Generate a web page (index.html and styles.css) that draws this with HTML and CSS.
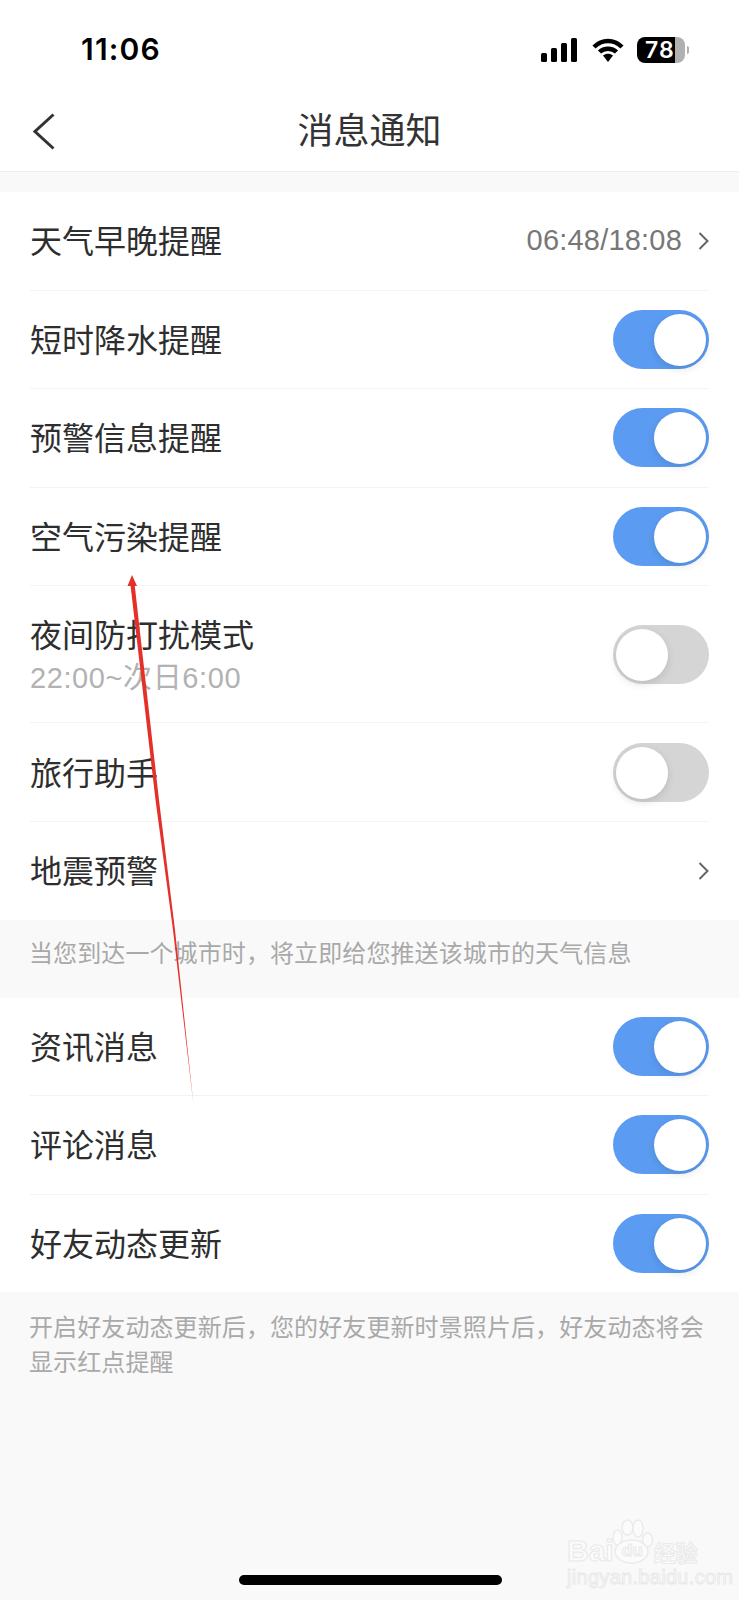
FILE: index.html
```html
<!DOCTYPE html>
<html lang="zh">
  <head>
    <meta charset="utf-8">
    <title>消息通知</title>
    <link rel="stylesheet" href="styles.css">
  </head>
  <body>
    <div class="page">
      <div class="status-bar">
        <span class="clock">11:06</span>
        <div class="status-icons">
          <svg class="signal" width="36" height="24" viewBox="0 0 36 24">
            <rect x="0" y="15" width="6" height="9" rx="1.5" />
            <rect x="10" y="10" width="6" height="14" rx="1.5" />
            <rect x="20" y="5" width="6" height="19" rx="1.5" />
            <rect x="30" y="0" width="6" height="24" rx="1.5" />
          </svg>
          <svg class="wifi" width="32" height="24" viewBox="0 0 32 24">
            <path d="M2 9 C10 1 22 1 30 9" />
            <path d="M7.5 14 C12 9.5 20 9.5 24.5 14" />
            <path class="wifi-dot" d="M11 17.5 C14 15 18 15 21 17.5 L16 24 Z" />
          </svg>
          <div class="battery">
            <div class="battery-body"><span class="battery-num">78</span></div>
            <div class="battery-nub"></div>
          </div>
        </div>
      </div>

      <div class="nav-bar">
        <svg class="back-icon" width="22" height="37" viewBox="0 0 22 37">
          <path d="M20.5 1.5 L2 18.5 L20.5 35.5" />
        </svg>
        <span class="nav-title">消息通知</span>
      </div>

      <div class="section section-first">
        <div class="row">
          <span class="row-label">天气早晚提醒</span>
          <div class="row-right">
            <span class="row-value">06:48/18:08</span>
            <svg class="chevron" width="11" height="18" viewBox="0 0 11 18"><path d="M1.5 1 L9.5 9 L1.5 17" /></svg>
          </div>
        </div>
        <div class="row">
          <span class="row-label">短时降水提醒</span>
          <div class="toggle on"><div class="knob"></div></div>
        </div>
        <div class="row">
          <span class="row-label">预警信息提醒</span>
          <div class="toggle on"><div class="knob"></div></div>
        </div>
        <div class="row">
          <span class="row-label">空气污染提醒</span>
          <div class="toggle on"><div class="knob"></div></div>
        </div>
        <div class="row row-tall">
          <div class="row-text">
            <span class="row-title">夜间防打扰模式</span>
            <span class="row-sub">22:00~次日6:00</span>
          </div>
          <div class="toggle"><div class="knob"></div></div>
        </div>
        <div class="row">
          <span class="row-label">旅行助手</span>
          <div class="toggle"><div class="knob"></div></div>
        </div>
        <div class="row">
          <span class="row-label">地震预警</span>
          <svg class="chevron" width="11" height="18" viewBox="0 0 11 18"><path d="M1.5 1 L9.5 9 L1.5 17" /></svg>
        </div>
      </div>

      <p class="note note-single">当您到达一个城市时，将立即给您推送该城市的天气信息</p>

      <div class="section">
        <div class="row">
          <span class="row-label">资讯消息</span>
          <div class="toggle on"><div class="knob"></div></div>
        </div>
        <div class="row">
          <span class="row-label">评论消息</span>
          <div class="toggle on"><div class="knob"></div></div>
        </div>
        <div class="row">
          <span class="row-label">好友动态更新</span>
          <div class="toggle on"><div class="knob"></div></div>
        </div>
      </div>

      <p class="note">开启好友动态更新后，您的好友更新时景照片后，好友动态将会<br>显示红点提醒</p>

      <div class="home-bar"></div>

      <!-- annotation drawn over the screenshot -->
      <svg class="arrow" width="739" height="1600" viewBox="0 0 739 1600">
        <path d="M132 575 L137 586 L134.8 586 L159 800 L175 930 L193.5 1105 L173 930 L155.5 800 L130.6 586 L127.5 586 Z" />
      </svg>

      <div class="watermark">
        <svg class="paw" width="42" height="46" viewBox="0 0 42 46">
          <ellipse cx="5.5" cy="19.5" rx="4.5" ry="7.5" />
          <ellipse cx="15.5" cy="9.5" rx="5.5" ry="7.5" />
          <ellipse cx="26" cy="10.5" rx="5" ry="8.5" />
          <ellipse cx="35.5" cy="22" rx="5" ry="7" />
          <ellipse cx="19.5" cy="33.5" rx="16.5" ry="11.5" />
        </svg>
        <div class="wm-logo"><span>Bai</span><span class="wm-du">du</span><span class="wm-cn">经验</span></div>
        <div class="wm-url">jingyan.baidu.com</div>
      </div>
    </div>
  </body>
</html>
```

FILE: styles.css
```css
* {
  box-sizing: border-box;
}

html,
body {
  margin: 0;
  padding: 0;
}

body {
  font-family: "Noto Sans CJK SC", "Noto Sans", sans-serif;
  background: #f9f9f9;
}

.page {
  position: relative;
  width: 739px;
  height: 1600px;
  overflow: hidden;
  background: #f9f9f9;
}

/* status bar */
.status-bar {
  height: 86px;
  padding: 30px 50px 0 81px;
  display: flex;
  justify-content: space-between;
  align-items: flex-start;
  background: #fff;
}

.clock {
  font-family: Inter, sans-serif;
  font-size: 30px;
  line-height: 38px;
  font-weight: 600;
  letter-spacing: 1.2px;
  color: #000;
}

.status-icons {
  display: flex;
  align-items: center;
  gap: 15px;
  margin-top: 7px;
}

.signal {
  fill: #000;
}

.wifi {
  fill: none;
  stroke: #000;
  stroke-width: 4.5;
  margin-right: -2px;
}

.wifi-dot {
  fill: #000;
  stroke: none;
}

.battery {
  display: flex;
  align-items: center;
  gap: 2px;
}

.battery-body {
  width: 48px;
  height: 26px;
  border-radius: 8px;
  background: linear-gradient(to right, #000 38px, #b0b0b0 38px);
  padding-left: 8px;
}

.battery-num {
  display: block;
  font-family: Inter, sans-serif;
  font-size: 23px;
  line-height: 26px;
  font-weight: 600;
  letter-spacing: 1px;
  color: #fff;
}

.battery-nub {
  width: 2px;
  height: 8px;
  border-radius: 0 2px 2px 0;
  background: #b0b0b0;
}

/* nav bar */
.nav-bar {
  position: relative;
  height: 86px;
  display: flex;
  align-items: center;
  justify-content: center;
  background: #fff;
  border-bottom: 1px solid #eee;
}

.back-icon {
  position: absolute;
  left: 33px;
  top: 27px;
  fill: none;
  stroke: #333;
  stroke-width: 3;
}

.nav-title {
  font-size: 36px;
  color: #333;
  margin-top: -2px;
}

/* lists */
.section {
  background: #fff;
  padding: 0 30px;
}

.section-first {
  margin-top: 20px;
}

.row {
  height: 98.6px;
  display: flex;
  align-items: center;
  justify-content: space-between;
  border-bottom: 1px solid #f3f3f3;
}

.row:last-child {
  height: 97.6px;
  border-bottom: none;
}

.row-tall {
  height: 137px;
}

.row-text {
  display: flex;
  flex-direction: column;
  margin-top: 2px;
}

.row-label {
  font-size: 32px;
  line-height: 44px;
  padding-bottom: 3px;
  color: #2e2e2e;
}

.row-title {
  font-size: 32px;
  line-height: 42px;
  color: #2e2e2e;
}

.row-sub {
  margin-top: 4px;
  font-family: "Liberation Sans", "Noto Sans CJK SC", sans-serif;
  font-size: 29px;
  line-height: 40px;
  letter-spacing: 0.6px;
  color: #b2b2b2;
}

.row-right {
  display: flex;
  align-items: center;
  gap: 16px;
}

.row-value {
  font-family: "Liberation Sans", sans-serif;
  font-size: 29px;
  letter-spacing: 0.2px;
  color: #777;
}

.chevron {
  fill: none;
  stroke: #666;
  stroke-width: 2;
}

/* switches */
.toggle {
  width: 96px;
  height: 59px;
  padding: 4px 3px;
  border-radius: 30px;
  background: #d5d5d5;
  flex-shrink: 0;
}

.toggle.on {
  background: #5b9cf2;
  display: flex;
  justify-content: flex-end;
}

.knob {
  width: 52px;
  height: 52px;
  border-radius: 50%;
  background: #fff;
  box-shadow: 0 3px 8px rgba(0, 0, 0, 0.12);
}

/* notes */
.note {
  margin: 0;
  padding: 16px 29px 0;
  font-size: 24px;
  line-height: 35px;
  letter-spacing: 0.1px;
  color: #a9a9a9;
}

.note-single {
  height: 78px;
  padding-top: 14px;
  white-space: nowrap;
}

.home-bar {
  position: absolute;
  left: 239px;
  top: 1575px;
  width: 263px;
  height: 10px;
  border-radius: 5px;
  background: #000;
}

.arrow {
  position: absolute;
  left: 0;
  top: 0;
  fill: #e5302a;
}

/* watermark */
.watermark {
  position: absolute;
  left: 566px;
  top: 1518px;
  width: 136px;
  height: 68px;
  color: #fbfbfb;
  -webkit-text-stroke: 1px #e9e9e9;
}

.paw {
  position: absolute;
  left: 46px;
  top: 0;
  fill: #fbfbfb;
  stroke: #ebebeb;
  stroke-width: 1.5;
}

.wm-logo {
  position: absolute;
  left: 1px;
  top: 13px;
  display: flex;
  align-items: center;
  font-family: "Liberation Sans", sans-serif;
  font-size: 30px;
  line-height: 40px;
  font-weight: 700;
  white-space: nowrap;
}

.wm-du {
  width: 39px;
  margin-left: -1px;
  font-size: 17px;
  text-align: center;
}

.wm-cn {
  margin-left: 2px;
  font-family: "Noto Sans CJK SC", sans-serif;
  font-size: 22px;
}

.wm-url {
  position: absolute;
  left: 1px;
  top: 48px;
  font-family: "Liberation Sans", sans-serif;
  font-size: 20px;
  line-height: 22px;
  letter-spacing: 0.3px;
  white-space: nowrap;
}
```
